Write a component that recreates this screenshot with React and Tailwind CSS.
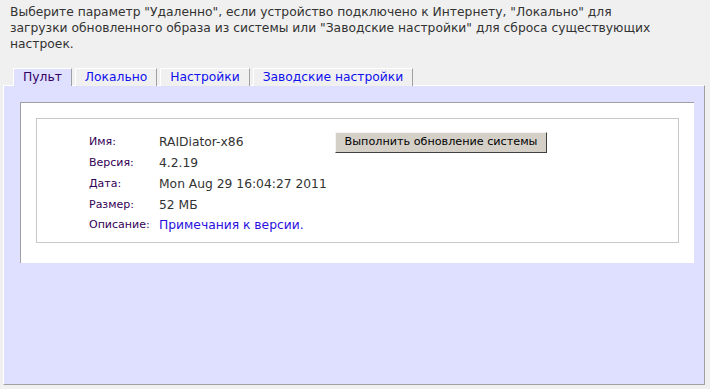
import React from 'react';

const TABS = [
  { label: 'Пульт', active: true },
  { label: 'Локально' },
  { label: 'Настройки' },
  { label: 'Заводские настройки' },
];

const ROWS = [
  { label: 'Версия:', value: '4.2.19' },
  { label: 'Дата:', value: 'Mon Aug 29 16:04:27 2011' },
  { label: 'Размер:', value: '52 МБ' },
];

export default function App() {
  return (
    <div className="w-[710px] h-[389px] bg-[#f0f0f0] overflow-hidden" style={{ fontFamily: '"DejaVu Sans", Verdana, sans-serif' }}>
      {/* Intro */}
      <p className="w-[660px] pl-[10px] pt-[4px] text-[12.3px] leading-[16px] text-[#333]">
        Выберите параметр "Удаленно", если устройство подключено к Интернету, "Локально" для загрузки обновленного образа из системы или "Заводские настройки" для сброса существующих настроек.
      </p>

      {/* Tabs */}
      <div className="flex gap-[3px] pl-[13px] mt-[16px]">
        {TABS.map((tab) => (
          <div
            key={tab.label}
            className={`h-[18px] px-[9px] border-t border-l border-white border-r border-r-[#a0a0a0] text-[12.3px] leading-[16px] ${
              tab.active ? 'bg-[#dfdfff] text-[#330066] relative z-10' : 'bg-[#f0f0f0] text-[#1010ee]'
            }`}
          >
            {tab.label}
          </div>
        ))}
      </div>

      {/* Panel */}
      <div className="ml-[3px] w-[702px] h-[300px] bg-[#dfdfff] border-t border-l border-white border-r border-b border-r-[#a0a0a0] border-b-[#a0a0a0] -mt-px pt-[16px] pl-[16px]">
        <div className="w-[674px] bg-white border-t border-l border-[#a0a0a0] pt-[15px] pl-[15px] pb-[20px]">
          <div className="w-[643px] border border-[#c8c8c8] pl-[52px] pt-[12px] pb-[6px]">
            <div className="flex items-center h-[22px]">
              <span className="w-[70px] text-[11px] text-[#330055]">Имя:</span>
              <span className="w-[176px] text-[12.3px] text-[#333]">RAIDiator-x86</span>
              <button className="h-[21px] w-[212px] bg-[#d4d0c8] border-t border-l border-[#f4f4f4] border-r border-b border-r-[#404040] border-b-[#404040] text-[11.2px] text-black leading-none">
                Выполнить обновление системы
              </button>
            </div>
            {ROWS.map((row) => (
              <div key={row.label} className="flex items-center h-[20.75px]">
                <span className="w-[70px] text-[11px] text-[#330055]">{row.label}</span>
                <span className="text-[12.3px] text-[#333]">{row.value}</span>
              </div>
            ))}
            <div className="flex items-center h-[20.75px]">
              <span className="w-[70px] text-[11px] text-[#330055]">Описание:</span>
              <span className="text-[12.3px] text-[#2a10e0]">Примечания к версии.</span>
            </div>
          </div>
        </div>
      </div>
    </div>
  );
}
